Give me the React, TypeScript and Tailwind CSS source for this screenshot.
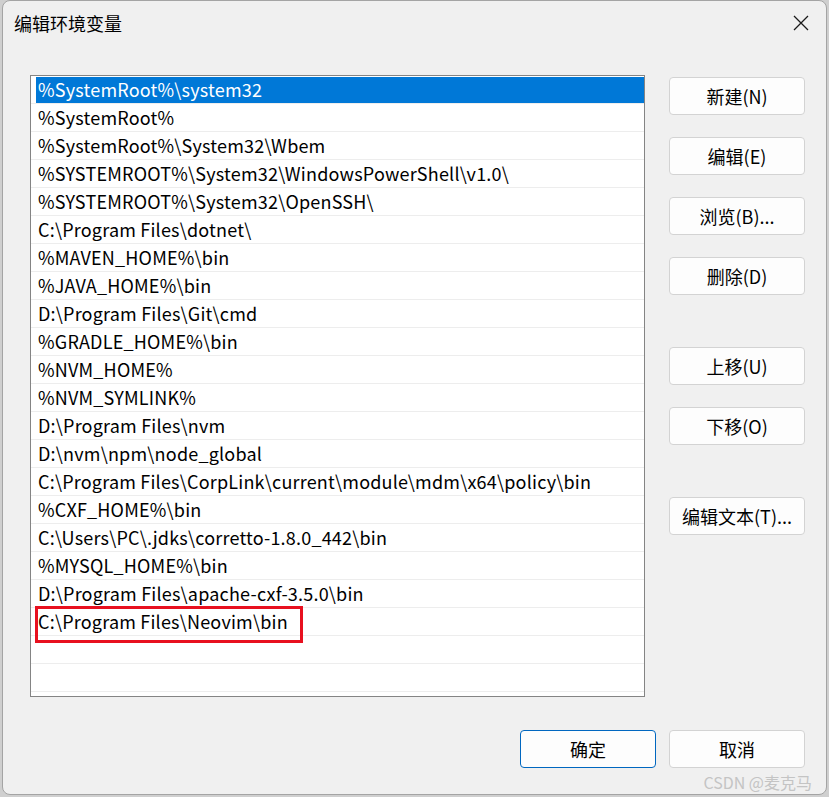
import React from "react";

const items = [
  "%SystemRoot%\\system32",
  "%SystemRoot%",
  "%SystemRoot%\\System32\\Wbem",
  "%SYSTEMROOT%\\System32\\WindowsPowerShell\\v1.0\\",
  "%SYSTEMROOT%\\System32\\OpenSSH\\",
  "C:\\Program Files\\dotnet\\",
  "%MAVEN_HOME%\\bin",
  "%JAVA_HOME%\\bin",
  "D:\\Program Files\\Git\\cmd",
  "%GRADLE_HOME%\\bin",
  "%NVM_HOME%",
  "%NVM_SYMLINK%",
  "D:\\Program Files\\nvm",
  "D:\\nvm\\npm\\node_global",
  "C:\\Program Files\\CorpLink\\current\\module\\mdm\\x64\\policy\\bin",
  "%CXF_HOME%\\bin",
  "C:\\Users\\PC\\.jdks\\corretto-1.8.0_442\\bin",
  "%MYSQL_HOME%\\bin",
  "D:\\Program Files\\apache-cxf-3.5.0\\bin",
  "C:\\Program Files\\Neovim\\bin",
  "",
  "",
];

function Btn({ label, primary }: { label: string; primary?: boolean }) {
  return (
    <div
      className={
        "w-[136px] h-[38px] flex items-center justify-center rounded-[4px] border bg-[#fdfdfd] text-[18px] text-black " +
        (primary ? "border-[#0067c0]" : "border-[#d3d3d3]")
      }
    >
      {label}
    </div>
  );
}

export default function App() {
  return (
    <div
      className="w-[829px] h-[797px] bg-[#cfcfcf] overflow-hidden"
      style={{ fontFamily: '"Noto Sans CJK SC", "Noto Sans", sans-serif' }}
    >
      <div className="relative ml-[2px] w-[825px] h-[795px] rounded-[8px] border border-[#a4a4a4] bg-[#f0f0f0] flex flex-col">
        {/* title bar */}
        <div className="h-[44px] flex items-center justify-between pl-[11px] pr-[16px]">
          <span className="text-[18px] text-black leading-none">编辑环境变量</span>
          <svg width="16" height="16" viewBox="0 0 16 16" className="mr-[1px]">
            <path d="M1 1 L15 15 M15 1 L1 15" stroke="#1a1a1a" strokeWidth="1.3" />
          </svg>
        </div>
        {/* body */}
        <div className="flex pl-[27px] pt-[30px] gap-[24px]">
          <div className="relative w-[615px] h-[622px] border border-[#848484] bg-white overflow-hidden">
            {items.map((t, i) => (
              <div key={i} className="h-[28px] border-b border-[#ededed] flex">
                {i === 0 ? (
                  <div className="ml-[5px] mt-[1px] flex-1 h-[26px] bg-[#0078d7] text-white text-[18px] tracking-[0.2px] leading-[25px] pl-[2px] whitespace-nowrap">
                    {t}
                  </div>
                ) : (
                  <div className="ml-[7px] text-[18px] tracking-[0.2px] leading-[26px] text-black whitespace-nowrap">{t}</div>
                )}
              </div>
            ))}
            <div className="absolute left-[4px] top-[530px] w-[268px] h-[37px] border-[3px] border-[#e8101f]" />
          </div>
          <div className="flex flex-col mt-[2px]">
            <Btn label="新建(N)" />
            <div className="h-[22px]" />
            <Btn label="编辑(E)" />
            <div className="h-[22px]" />
            <Btn label="浏览(B)..." />
            <div className="h-[22px]" />
            <Btn label="删除(D)" />
            <div className="h-[52px]" />
            <Btn label="上移(U)" />
            <div className="h-[22px]" />
            <Btn label="下移(O)" />
            <div className="h-[52px]" />
            <Btn label="编辑文本(T)..." />
          </div>
        </div>
        {/* footer */}
        <div className="flex justify-end gap-[13px] pr-[21px] mt-[33px]">
          <Btn label="确定" primary />
          <Btn label="取消" />
        </div>
        <div className="absolute right-[14px] bottom-[4px] text-[16px] leading-none text-[#c4c4c4] whitespace-nowrap">
          CSDN @麦克马
        </div>
      </div>
    </div>
  );
}
